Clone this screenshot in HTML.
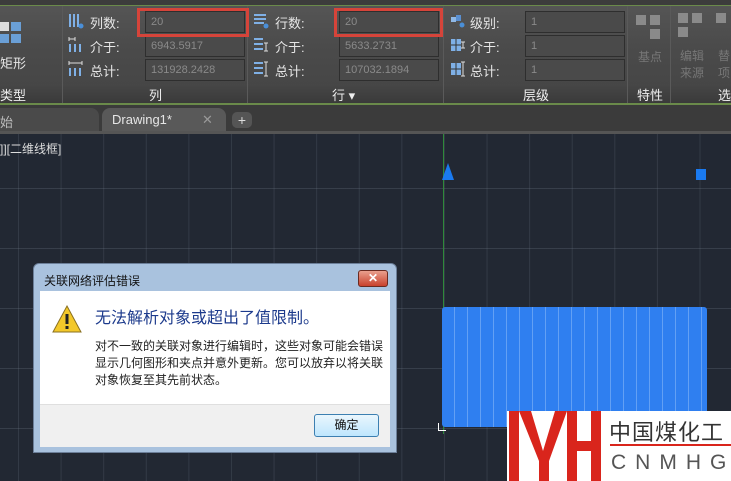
<!DOCTYPE html>
<html><head><meta charset="utf-8"><style>
*{margin:0;padding:0;box-sizing:border-box}
body{width:731px;height:481px;overflow:hidden;position:relative;background:#222833;font-family:"Liberation Sans","Noto Sans CJK SC",sans-serif;}
.a{position:absolute}
.rib{left:0;top:0;width:731px;height:104px;background:linear-gradient(#555 0,#4b4b4b 40%,#444 100%)}
.inp{position:absolute;height:22px;background:#4a4a4a;border:1px solid #2e2e2e;color:#8a8a8a;font-size:11px;line-height:20px;padding-left:5px}
.lbl{position:absolute;color:#e6e6e6;font-size:13px}
.red{position:absolute;border:3px solid #d6443a}
.sep{position:absolute;top:6px;width:1px;height:97px;background:#3a3a3a;border-right:1px solid #5a5a5a}
.bl{position:absolute;top:85px;color:#eee;font-size:13px}
.ic{position:absolute;width:16px;height:16px}
</style></head><body>
<div class="a" style="left:0;top:0;width:731px;height:6px;background:#3c3c3c"></div>
<div class="a" style="left:0;top:5px;width:731px;height:1px;background:#6a8a4a"></div>
<div class="a rib" style="top:6px;height:98px"></div>
<div class="a" style="left:0;top:84px;width:731px;height:19px;background:linear-gradient(#474747,#3a3a3a)"></div>
<div class="a" style="left:0;top:103px;width:731px;height:2px;background:#6a8a4a"></div>
<div class="a" style="left:0;top:22px;width:9px;height:9px;background:#ddd"></div>
<div class="a" style="left:11px;top:22px;width:10px;height:9px;background:#6a9fd6"></div>
<div class="a" style="left:0;top:34px;width:9px;height:9px;background:#6a9fd6"></div>
<div class="a" style="left:11px;top:34px;width:10px;height:9px;background:#6a9fd6"></div>
<div class="lbl" style="left:0;top:53px">矩形</div>
<div class="bl" style="left:0">类型</div>
<div class="sep" style="left:62px"></div><div class="sep" style="left:247px"></div><div class="sep" style="left:443px"></div><div class="sep" style="left:627px"></div><div class="sep" style="left:670px"></div>
<svg class="ic" style="left:68px;top:13px" viewBox="0 0 16 16"><g stroke="#7fb0e6" stroke-width="2"><path d="M2 1v13M6 1v13M10 1v13"/></g><circle cx="13" cy="13" r="2.5" fill="#4a8fd8"/></svg>
<svg class="ic" style="left:68px;top:37px" viewBox="0 0 16 16"><path d="M1 2h6M1 0v4M7 0v4" stroke="#ddd"/><g stroke="#7fb0e6" stroke-width="2"><path d="M2 7v8M7 7v8M12 7v8"/></g></svg>
<svg class="ic" style="left:68px;top:61px" viewBox="0 0 16 16"><path d="M1 2h13M1 0v4M14 0v4" stroke="#ddd"/><g stroke="#7fb0e6" stroke-width="2"><path d="M2 7v8M7 7v8M12 7v8"/></g></svg>
<div class="lbl" style="left:90px;top:13px">列数:</div>
<div class="lbl" style="left:90px;top:37px">介于:</div>
<div class="lbl" style="left:90px;top:61px">总计:</div>
<div class="inp" style="left:145px;top:11px;width:100px">20</div>
<div class="inp" style="left:145px;top:35px;width:100px">6943.5917</div>
<div class="inp" style="left:145px;top:59px;width:100px">131928.2428</div>
<div class="red" style="left:137px;top:8px;width:112px;height:29px"></div>
<div class="bl" style="left:149px">列</div>
<svg class="ic" style="left:253px;top:13px" viewBox="0 0 16 16"><g stroke="#7fb0e6" stroke-width="2"><path d="M1 2h12M1 6h12M1 10h10"/></g><circle cx="13" cy="13" r="2.5" fill="#4a8fd8"/></svg>
<svg class="ic" style="left:253px;top:37px" viewBox="0 0 16 16"><g stroke="#7fb0e6" stroke-width="2"><path d="M1 2h9M1 7h9M1 12h9"/></g><path d="M13 6v8M11 6h4M11 14h4" stroke="#ddd"/></svg>
<svg class="ic" style="left:253px;top:61px" viewBox="0 0 16 16"><g stroke="#7fb0e6" stroke-width="2"><path d="M1 2h9M1 7h9M1 12h9"/></g><path d="M13 1v14M11 1h4M11 15h4" stroke="#ddd"/></svg>
<div class="lbl" style="left:275px;top:13px">行数:</div>
<div class="lbl" style="left:275px;top:37px">介于:</div>
<div class="lbl" style="left:275px;top:61px">总计:</div>
<div class="inp" style="left:339px;top:11px;width:100px">20</div>
<div class="inp" style="left:339px;top:35px;width:100px">5633.2731</div>
<div class="inp" style="left:339px;top:59px;width:100px">107032.1894</div>
<div class="red" style="left:334px;top:8px;width:109px;height:29px"></div>
<div class="bl" style="left:332px">行 ▾</div>
<svg class="ic" style="left:450px;top:13px" viewBox="0 0 16 16"><rect x="1" y="4" width="5" height="5" fill="#8fb8e6"/><rect x="6" y="2" width="5" height="6" fill="#5a8fd0"/><circle cx="12" cy="12" r="2.5" fill="#4a8fd8"/></svg>
<svg class="ic" style="left:450px;top:37px" viewBox="0 0 16 16"><rect x="1" y="2" width="10" height="12" fill="#7fb0e6"/><path d="M1 8h10M6 2v12" stroke="#333"/><path d="M13 5v6M11 5h4M11 11h4" stroke="#ddd"/></svg>
<svg class="ic" style="left:450px;top:61px" viewBox="0 0 16 16"><rect x="1" y="2" width="10" height="12" fill="#7fb0e6"/><path d="M1 8h10M6 2v12" stroke="#333"/><path d="M13 1v14M11 1h4M11 15h4" stroke="#ddd"/></svg>
<div class="lbl" style="left:470px;top:13px">级别:</div>
<div class="lbl" style="left:470px;top:37px">介于:</div>
<div class="lbl" style="left:470px;top:61px">总计:</div>
<div class="inp" style="left:525px;top:11px;width:100px">1</div>
<div class="inp" style="left:525px;top:35px;width:100px">1</div>
<div class="inp" style="left:525px;top:59px;width:100px">1</div>
<div class="bl" style="left:523px">层级</div>
<div class="a" style="left:636px;top:15px;width:10px;height:10px;background:#8a8a8a"></div>
<div class="a" style="left:650px;top:15px;width:10px;height:10px;background:#8a8a8a"></div>
<div class="a" style="left:650px;top:29px;width:10px;height:10px;background:#8a8a8a"></div>
<div class="lbl" style="left:638px;top:48px;color:#777;font-size:12px">基点</div>
<div class="bl" style="left:637px">特性</div>
<div class="a" style="left:678px;top:13px;width:10px;height:10px;background:#8a8a8a"></div>
<div class="a" style="left:692px;top:13px;width:10px;height:10px;background:#8a8a8a"></div>
<div class="a" style="left:678px;top:27px;width:10px;height:10px;background:#8a8a8a"></div>
<div class="a" style="left:716px;top:13px;width:10px;height:10px;background:#8a8a8a"></div>
<div class="lbl" style="left:680px;top:48px;color:#777;font-size:12px;line-height:17px">编辑<br>来源</div>
<div class="lbl" style="left:718px;top:48px;color:#777;font-size:12px;line-height:17px">替<br>项</div>
<div class="bl" style="left:718px">选</div>
<div class="a" style="left:0;top:105px;width:731px;height:27px;background:#3b3b3b"></div>
<div class="a" style="left:0;top:108px;width:99px;height:24px;background:#4a4a4a;border-radius:0 8px 0 0;color:#bbb;font-size:13px;padding:4px 0 0 0">始</div>
<div class="a" style="left:102px;top:108px;width:124px;height:24px;background:#595959;border-radius:8px 8px 0 0;color:#e6e6e6;font-size:13px;padding:4px 0 0 10px">Drawing1*<span style="position:absolute;left:100px;color:#999">✕</span></div>
<div class="a" style="left:232px;top:112px;width:20px;height:16px;background:#555;border-radius:5px;color:#ddd;font-size:14px;line-height:16px;text-align:center">+</div>
<div class="a" style="left:0;top:131px;width:731px;height:3px;background:#555"></div>
<div class="a" style="left:0;top:134px;width:731px;height:347px;background-image:linear-gradient(90deg,rgba(120,130,145,.2) 1px,transparent 1px),linear-gradient(rgba(120,130,145,.25) 1px,transparent 1px);background-size:42.6px 60px;background-position:18px 54px"></div>
<div class="a" style="left:0;top:140px;color:#ddd;font-size:12px">]][二维线框]</div>
<div class="a" style="left:443px;top:134px;width:1px;height:300px;background:#2f8a3a"></div>
<svg class="a" style="left:442px;top:163px" width="14" height="18"><path d="M6 0L12 17H0Z" fill="#1a7af0"/></svg>
<div class="a" style="left:696px;top:169px;width:10px;height:11px;background:#1a7af0"></div>
<div class="a" style="left:442px;top:307px;width:265px;height:120px;background:#2f7ff0;background-image:repeating-linear-gradient(90deg,transparent 0 12px,rgba(220,235,255,.3) 12px 13px);border-radius:3px"></div>
<div class="a" style="left:438px;top:423px;width:8px;height:8px;border-left:1px solid #fff;border-bottom:1px solid #fff"></div>
<div class="a" style="left:33px;top:263px;width:364px;height:190px;background:#a9c2de;border:1px solid #6c7f99;border-radius:6px 6px 0 0">
 <div class="a" style="left:10px;top:8px;font-size:12px;color:#111">关联网络评估错误</div>
 <div class="a" style="left:324px;top:6px;width:30px;height:17px;background:linear-gradient(#e9a08e,#c9412c);border:1px solid #6a2a20;border-radius:3px;color:#fff;font-size:12px;text-align:center;line-height:15px;font-weight:bold">✕</div>
 <div class="a" style="left:6px;top:27px;width:350px;height:113px;background:#fff"></div>
 <div class="a" style="left:6px;top:140px;width:350px;height:43px;background:#f0f0f0;border-top:1px solid #dfdfdf"></div>
 <svg class="a" style="left:18px;top:40px" width="30" height="30"><path d="M15 2L29 28H1Z" fill="#f3c82a" stroke="#8a7020"/><rect x="13.5" y="10" width="3" height="10" fill="#222"/><rect x="13.5" y="22" width="3" height="3" fill="#222"/></svg>
 <div class="a" style="left:61px;top:40px;font-size:16px;color:#1c3a8c">无法解析对象或超出了值限制。</div>
 <div class="a" style="left:61px;top:74px;font-size:12px;color:#222;line-height:17px;width:292px">对不一致的关联对象进行编辑时，这些对象可能会错误显示几何图形和夹点并意外更新。您可以放弃以将关联对象恢复至其先前状态。</div>
 <div class="a" style="left:280px;top:150px;width:65px;height:23px;border:1px solid #3c7fb1;border-radius:3px;background:linear-gradient(#eaf6fd,#bee6fd);font-size:12px;text-align:center;line-height:21px;color:#111">确定</div>
</div>
<div class="a" style="left:507px;top:411px;width:224px;height:70px;background:#fff;overflow:hidden">
 <svg class="a" style="left:0;top:0" width="94" height="70"><g fill="#d9251c"><rect x="2" y="0" width="10" height="70"/><path d="M12 0h12l12 40 12-40h12L42 50v20H32V50Z"/><rect x="60" y="0" width="10" height="70"/><rect x="84" y="0" width="10" height="70"/><rect x="60" y="30" width="34" height="10"/></g></svg>
 <div class="a" style="left:102px;top:4px;font-size:22px;color:#333;letter-spacing:1px;white-space:nowrap">中国煤化工</div>
 <div class="a" style="left:103px;top:33px;width:121px;height:2px;background:#d9251c"></div>
 <div class="a" style="left:104px;top:40px;font-size:21px;color:#555;letter-spacing:9px;white-space:nowrap">CNMHG</div>
</div>
</body></html>
